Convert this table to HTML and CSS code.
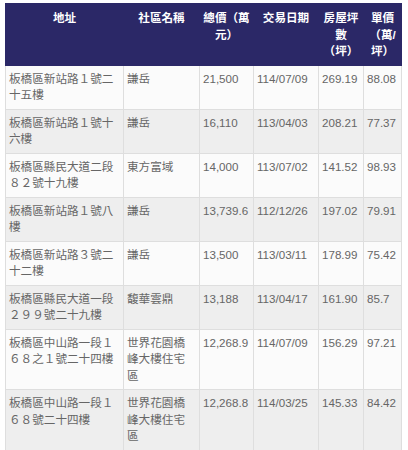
FILE: index.html
```html
<!DOCTYPE html>
<html lang="zh-Hant">
<head>
<meta charset="utf-8">
<link rel="stylesheet" href="styles.css">
</head>
<body>
<div class="wrap">
<table class="deals">
<colgroup>
<col class="c-addr"><col class="c-name"><col class="c-price"><col class="c-date"><col class="c-area"><col class="c-unit">
</colgroup>
<thead>
<tr><th>地址</th><th>社區名稱</th><th>總價（萬元）</th><th>交易日期</th><th>房屋坪數（坪）</th><th>單價（萬/坪）</th></tr>
</thead>
<tbody>
<tr><td>板橋區新站路１號二十五樓</td><td>謙岳</td><td>21,500</td><td>114/07/09</td><td>269.19</td><td>88.08</td></tr>
<tr><td>板橋區新站路１號十六樓</td><td>謙岳</td><td>16,110</td><td>113/04/03</td><td>208.21</td><td>77.37</td></tr>
<tr><td>板橋區縣民大道二段８２號十九樓</td><td>東方富域</td><td>14,000</td><td>113/07/02</td><td>141.52</td><td>98.93</td></tr>
<tr><td>板橋區新站路１號八樓</td><td>謙岳</td><td>13,739.6</td><td>112/12/26</td><td>197.02</td><td>79.91</td></tr>
<tr><td>板橋區新站路３號二十二樓</td><td>謙岳</td><td>13,500</td><td>113/03/11</td><td>178.99</td><td>75.42</td></tr>
<tr><td>板橋區縣民大道一段２９９號二十九樓</td><td>馥華雲鼎</td><td>13,188</td><td>113/04/17</td><td>161.90</td><td>85.7</td></tr>
<tr><td>板橋區中山路一段１６８之１號二十四樓</td><td>世界花園橋峰大樓住宅區</td><td>12,268.9</td><td>114/07/09</td><td>156.29</td><td>97.21</td></tr>
<tr><td>板橋區中山路一段１６８號二十四樓</td><td>世界花園橋峰大樓住宅區</td><td>12,268.8</td><td>114/03/25</td><td>145.33</td><td>84.42</td></tr>
</tbody>
</table>
</div>
</body>
</html>
```
FILE: styles.css
```css
html, body {
  margin: 0;
  padding: 0;
  background: #ffffff;
}
.wrap {
  padding: 3px 7px 0 5px;
}
.deals {
  width: 396px;
  table-layout: fixed;
  border-collapse: collapse;
  font-family: "Liberation Sans", "Noto Sans CJK TC", sans-serif;
  font-size: 11.6px;
  line-height: 16.5px;
  color: #666666;
  border-right: 1px solid #e2e2e2;
}
.c-addr { width: 118px; }
.c-name { width: 76px; }
.c-price { width: 54px; }
.c-date { width: 65px; }
.c-area { width: 45px; }
.c-unit { width: 38px; }
.deals th {
  background: #2b2867;
  color: #ffffff;
  font-weight: bold;
  text-align: center;
  vertical-align: top;
  padding: 6px 3px 5px;
  border: 1px solid #2b2867;
}
.deals td {
  text-align: left;
  vertical-align: top;
  padding: 5px 3px;
  border: 1px solid #dedede;
  word-break: break-all;
}
.deals tbody tr:nth-child(odd) td {
  background: #fbfbfb;
}
.deals tbody tr:nth-child(even) td {
  background: #eeeeee;
}
```
